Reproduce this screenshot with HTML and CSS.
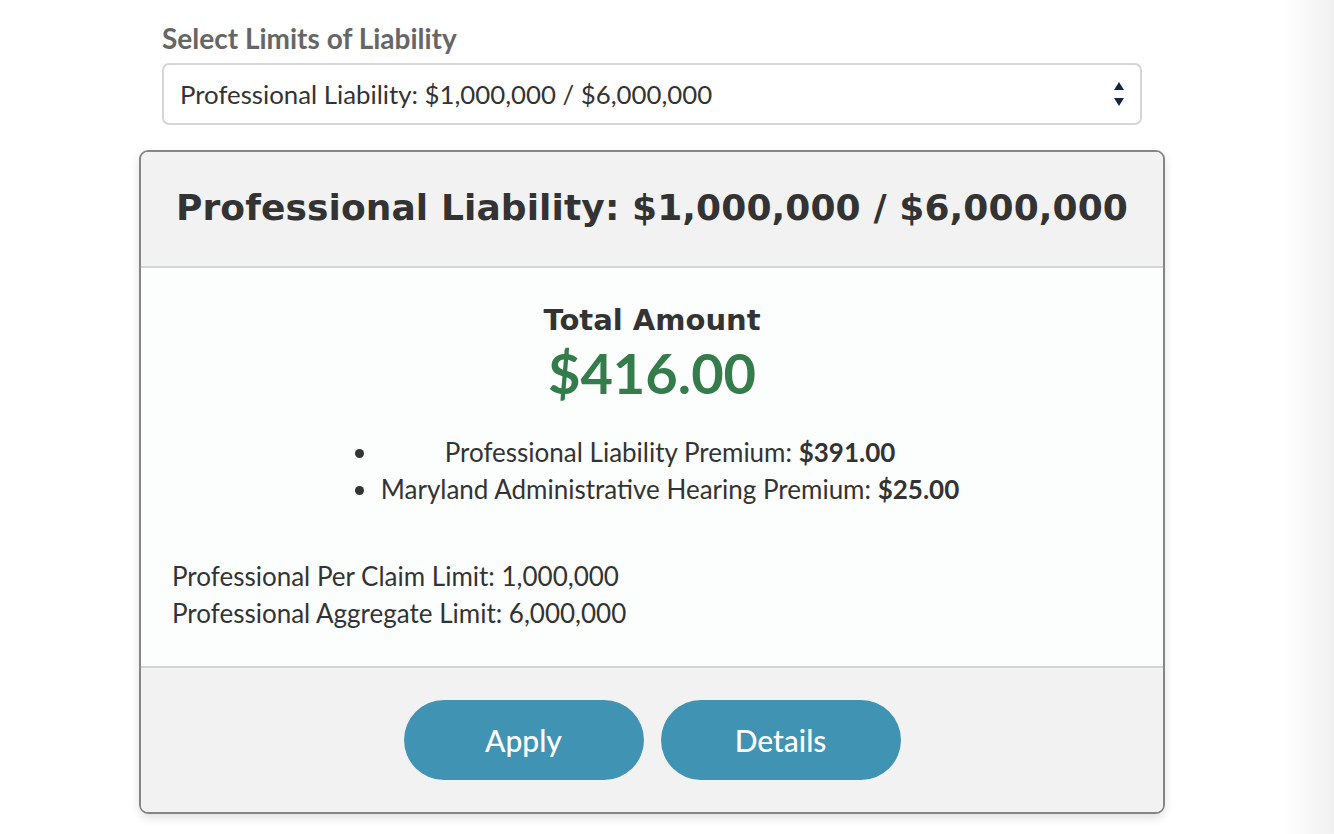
FILE: index.html
```html
<!DOCTYPE html>
<html>
<head>
<meta charset="utf-8">
<link rel="stylesheet" href="styles.css">
</head>
<body>
<div class="wrap">
  <div class="field">
    <label class="field-label">Select Limits of Liability</label>
    <div class="select">
      <span class="select-text">Professional Liability: $1,000,000 / $6,000,000</span>
      <svg class="arrows" width="12" height="26" viewBox="0 0 12 26"><path d="M6 1 L11 9 L1 9 Z" fill="#13254a"/><path d="M1 17 L11 17 L6 25 Z" fill="#13254a"/></svg>
    </div>
  </div>
  <div class="card">
    <div class="card-head">Professional Liability: $1,000,000 / $6,000,000</div>
    <div class="card-body">
      <div class="total-label">Total Amount</div>
      <div class="total">$416.00</div>
      <div class="list-wrap">
        <ul class="items">
          <li>Professional Liability Premium: <b>$391.00</b></li>
          <li>Maryland Administrative Hearing Premium: <b>$25.00</b></li>
        </ul>
      </div>
      <div class="limits">
        <div>Professional Per Claim Limit: 1,000,000</div>
        <div>Professional Aggregate Limit: 6,000,000</div>
      </div>
    </div>
    <div class="card-foot">
      <button class="btn">Apply</button>
      <button class="btn">Details</button>
    </div>
  </div>
</div>
</body>
</html>
```
FILE: styles.css
```css
html, body {
  margin: 0;
  padding: 0;
}
body {
  width: 1334px;
  height: 834px;
  overflow: hidden;
  font-family: Lato, "Liberation Sans", sans-serif;
  color: #333;
  background: linear-gradient(to right, #ffffff 0, #ffffff 1282px, #f1f1f1 1334px);
}
.wrap {
  width: 1026px;
  margin-left: 139px;
  padding-top: 20px;
}
.field {
  margin: 0 23px;
}
.field-label {
  display: block;
  font-weight: 700;
  font-size: 28px;
  line-height: 36px;
  color: #666;
  margin-bottom: 7px;
}
.select {
  height: 58px;
  border: 2px solid #d6d6d6;
  border-radius: 7px;
  display: flex;
  align-items: center;
  justify-content: space-between;
  padding: 0 15px 0 16px;
  background: #fff;
}
.select-text {
  font-size: 25.8px;
}
.arrows {
  display: block;
}
.card {
  margin-top: 25px;
  border: 2px solid #868686;
  border-radius: 9px;
  overflow: hidden;
  box-shadow: 0 4px 10px rgba(0,0,0,0.12);
}
.card-head {
  background: #f2f2f2;
  height: 116px;
  padding-bottom: 4px;
  box-sizing: border-box;
  border-bottom: 2px solid #d4d4d4;
  display: flex;
  align-items: center;
  justify-content: center;
  font-family: "DejaVu Sans", sans-serif;
  font-weight: 700;
  font-size: 36px;
  letter-spacing: 0.1px;
  color: #333;
}
.card-body {
  background: #fcfefe;
  padding: 34px 31px 34px;
}
.total-label {
  text-align: center;
  font-family: "DejaVu Sans", sans-serif;
  font-weight: 700;
  font-size: 29px;
  line-height: 36px;
}
.total {
  text-align: center;
  font-weight: 700;
  font-size: 56px;
  line-height: 70px;
  color: #357c4b;
}
.list-wrap {
  text-align: center;
  margin-top: 26px;
}
.items {
  display: inline-block;
  margin: 0;
  padding-left: 34px;
  font-size: 26px;
  line-height: 37px;
}
.items li {
  text-align: center;
  padding-left: 2px;
}
.limits {
  margin-top: 50px;
  font-size: 26px;
  line-height: 37px;
}
.card-foot {
  background: #f2f2f2;
  border-top: 2px solid #d4d4d4;
  display: flex;
  justify-content: center;
  gap: 17px;
  padding: 32px 0 32px;
}
.btn {
  width: 240px;
  height: 80px;
  border: none;
  border-radius: 40px;
  background: #4193b3;
  color: #fff;
  font-family: Lato, "Liberation Sans", sans-serif;
  font-size: 30px;
  font-weight: 500;
  padding: 0;
}
```
